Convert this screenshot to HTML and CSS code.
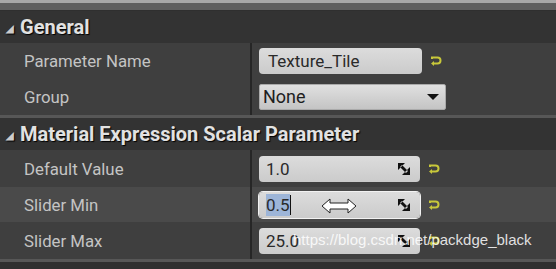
FILE: index.html
```html
<!DOCTYPE html><html lang="en">
<head>
    <meta charset="UTF-8">
    <title>Details</title>
    <link rel="stylesheet" href="styles.css">
</head>
<body>
<div class="top-strip"></div>

<div class="category">
    <div class="cat-header"><span class="arrow">◢</span>General</div>
    <div class="row">
        <div class="label">Parameter Name</div>
        <div class="value">
            <div class="textbox">Texture_Tile</div>
            <svg class="reset" viewBox="0 0 12 12"><path d="M2 4 V2.5 H7.5 A3 3 0 0 1 7.5 8.5 H3" fill="none" stroke="#c8c83a" stroke-width="2"/><path d="M1 8.5 L4 6 L4 11 Z" fill="#c8c83a"/></svg>
        </div>
    </div>
    <div class="row tall">
        <div class="label">Group</div>
        <div class="value">
            <div class="combo">None<span class="caret"></span></div>
        </div>
    </div>
</div>

<div class="category">
    <div class="cat-header"><span class="arrow">◢</span>Material Expression Scalar Parameter</div>
    <div class="row tall">
        <div class="label">Default Value</div>
        <div class="value">
            <div class="textbox num">1.0<svg class="spin" viewBox="0 0 12 12"><path d="M0 0 H7 L0 7 Z M12 12 H4 L12 4 Z M2 4 L8 10 L10 8 L4 2 Z" fill="#111"/></svg></div>
            <svg class="reset" viewBox="0 0 12 12"><path d="M2 4 V2.5 H7.5 A3 3 0 0 1 7.5 8.5 H3" fill="none" stroke="#c8c83a" stroke-width="2"/><path d="M1 8.5 L4 6 L4 11 Z" fill="#c8c83a"/></svg>
        </div>
    </div>
    <div class="row hover">
        <div class="label">Slider Min</div>
        <div class="value">
            <div class="textbox num focus"><span class="sel">0.5</span><span class="cursor-bar"></span>
                <svg class="pointer" viewBox="0 0 36 16"><path d="M1 8 L9 1 L9 5 L27 5 L27 1 L35 8 L27 15 L27 11 L9 11 L9 15 Z" fill="#fff" stroke="#222" stroke-width="1"/></svg>
                <svg class="spin" viewBox="0 0 12 12"><path d="M0 0 H7 L0 7 Z M12 12 H4 L12 4 Z M2 4 L8 10 L10 8 L4 2 Z" fill="#111"/></svg></div>
            <svg class="reset" viewBox="0 0 12 12"><path d="M2 4 V2.5 H7.5 A3 3 0 0 1 7.5 8.5 H3" fill="none" stroke="#c8c83a" stroke-width="2"/><path d="M1 8.5 L4 6 L4 11 Z" fill="#c8c83a"/></svg>
        </div>
    </div>
    <div class="row tall">
        <div class="label">Slider Max</div>
        <div class="value">
            <div class="textbox num">25.0<svg class="spin" viewBox="0 0 12 12"><path d="M0 0 H7 L0 7 Z M12 12 H4 L12 4 Z M2 4 L8 10 L10 8 L4 2 Z" fill="#111"/></svg></div>
            <svg class="reset" viewBox="0 0 12 12"><path d="M2 4 V2.5 H7.5 A3 3 0 0 1 7.5 8.5 H3" fill="none" stroke="#c8c83a" stroke-width="2"/><path d="M1 8.5 L4 6 L4 11 Z" fill="#c8c83a"/></svg>
        </div>
    </div>
</div>

<div class="watermark">https://blog.csdn.net/packdge_black</div>
</body>
</html>
```
FILE: styles.css
```css
body {
    margin: 0;
    background: #2f2f2f;
    font-family: Roboto, "Liberation Sans", sans-serif;
    width: 556px;
    height: 269px;
    overflow: hidden;
    position: relative;
}

.top-strip {
    height: 7px;
    border-top: 3px solid #a8a8a8;
    background: #5f5f5f;
    margin-bottom: 1px;
}

.category {
    border-bottom: 3px solid #575757;
}

.cat-header {
    height: 32px;
    background: #333;
    color: #e2e2e2;
    font-size: 20px;
    font-weight: bold;
    display: flex;
    align-items: center;
    text-shadow: 1px 1px 1px #000;
}

.arrow {
    font-size: 10px;
    width: 20px;
    text-align: center;
    color: #ccc;
    padding-top: 2px;
}

.row {
    display: flex;
    height: 35px;
    background: #3f3f3f;
}

.row.tall {
    height: 37px;
}

.row.hover {
    background: #4a4a4a;
}

.label {
    width: 226px;
    padding-left: 24px;
    color: #c4c4c4;
    font-size: 16.8px;
    display: flex;
    align-items: center;
    border-right: 2px solid #262626;
}

.value {
    display: flex;
    align-items: center;
    padding-left: 7px;
}

.textbox {
    width: 150px;
    height: 26px;
    border-radius: 4px;
    background: linear-gradient(#dcdcdc, #cbcbcb);
    color: #2a2a2a;
    font-size: 17px;
    display: flex;
    align-items: center;
    padding-left: 9px;
    padding-right: 4px;
    position: relative;
    box-sizing: content-box;
}

.textbox.num {
    padding-left: 7px;
}

.textbox.focus {
    box-shadow: 0 0 0 1px #f2f2f2;
}

.sel {
    background: #9db5d8;
    padding: 1px 0;
}

.cursor-bar {
    width: 1px;
    height: 20px;
    background: #111;
}

.spin {
    width: 12px;
    height: 12px;
    margin-left: auto;
    margin-right: 6px;
}

.pointer {
    position: absolute;
    left: 62px;
    top: 6px;
    width: 36px;
    height: 16px;
}

.combo {
    width: 176px;
    height: 24px;
    border: 1px solid #aaa;
    border-radius: 2px;
    background: linear-gradient(#e0e0e0, #c4c4c4);
    color: #1e1e1e;
    font-size: 18px;
    display: flex;
    align-items: center;
    padding-left: 3px;
    padding-right: 6px;
}

.caret {
    margin-left: auto;
    border-left: 6px solid transparent;
    border-right: 6px solid transparent;
    border-top: 6px solid #111;
}

.reset {
    width: 12px;
    height: 12px;
    margin-left: 8px;
}

.watermark {
    position: absolute;
    left: 293px;
    top: 231px;
    color: rgba(255, 255, 255, 0.85);
    font-family: "Liberation Sans", Arial, sans-serif;
    font-size: 15px;
}
```
